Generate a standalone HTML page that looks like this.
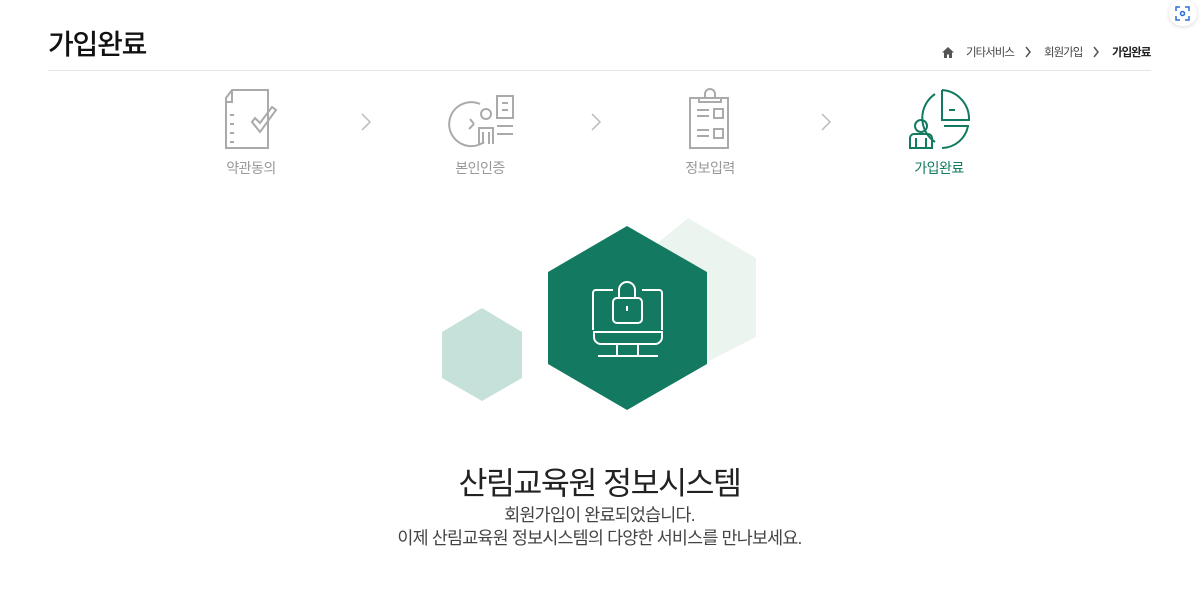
<!DOCTYPE html>
<html><head><meta charset="utf-8"><style>
body{margin:0;width:1199px;height:607px;background:#fff;font-family:"Liberation Sans","Noto Sans CJK KR",sans-serif;position:relative;overflow:hidden}
.a{position:absolute}
h1{position:absolute;left:48px;top:23px;margin:0;font-size:28px;font-weight:500;color:#111;letter-spacing:-1.2px}
.line{position:absolute;left:48px;top:70px;width:1103px;height:1px;background:#e5e5e5}
.bc{position:absolute;top:44px;font-size:11.5px;color:#444;letter-spacing:-1px}
.lbl{position:absolute;top:158px;font-size:14px;color:#999;width:100px;text-align:center;letter-spacing:-0.5px}
.t1{position:absolute;top:458px;left:0;width:1199px;text-align:center;font-size:31.5px;color:#222;letter-spacing:-1.5px}
.t2{position:absolute;top:504px;left:0;width:1199px;text-align:center;font-size:17.4px;color:#444;line-height:23px;letter-spacing:-0.8px}
</style></head><body>
<h1>가입완료</h1>
<div class="line"></div>
<svg class="a" style="left:941px;top:46px" width="14" height="13" viewBox="0 0 14 13"><path d="M7 1L1 6.5h2V12h3V8.5h2V12h3V6.5h2z" fill="#555"/></svg>
<div class="bc" style="left:966px">기타서비스</div>
<svg class="a" style="left:1024px;top:46px" width="8" height="12"><path d="M2 1l4 5-4 5" stroke="#555" stroke-width="1.5" fill="none"/></svg>
<div class="bc" style="left:1044px">회원가입</div>
<svg class="a" style="left:1092px;top:46px" width="8" height="12"><path d="M2 1l4 5-4 5" stroke="#555" stroke-width="1.5" fill="none"/></svg>
<div class="bc" style="left:1112px;font-weight:bold;color:#222">가입완료</div>
<div class="a" style="left:1169px;top:0;width:28px;height:26px;border-radius:13px;background:#fff;box-shadow:0 1px 4px rgba(0,0,0,.15)"></div>
<svg class="a" style="left:1175px;top:6px" width="15" height="15" viewBox="0 0 15 15" fill="none" stroke="#2a6fd6" stroke-width="1.5"><path d="M1 5V1h4M10 1h4v4M14 10v4h-4M5 14H1v-4"/><circle cx="7.5" cy="7.5" r="2"/></svg>

<svg class="a" style="left:200px;top:80px" width="800" height="80" viewBox="0 0 800 80" fill="none" stroke="#aaa" stroke-width="2">
<path d="M32 10h36v58H26V18zM32 10v12h-6"/><path d="M30 35h4M30 44h4M30 53h4M30 62h4" /><path d="M52 42l8 10 16-22-4-3-12 16-5-5z"/>
<path d="M280 24A22 22 0 1 0 284 62"/><path d="M274 44l-4-5M274 44l-5 5"/><circle cx="286" cy="34" r="5"/><path d="M279 64v-16h14v16M283 52v12M289 52v12"/><path d="M297 16h16v22h-16zM302 23h6M302 30h6M297 46h16M297 54h16"/>
<path d="M490 18h38v50h-38zM505 18v-4a5 5 0 0 1 10 0v4M499 18v4h22v-4M497 30h12M497 36h12M497 50h12M497 56h12M514 29h9v9h-9zM514 49h9v9h-9z"/>
<path d="M162 34l8 8-8 8M392 34l8 8-8 8M622 34l8 8-8 8" stroke="#bbb" stroke-width="1.5"/>
<g stroke="#127a60"><path d="M735 62A29 29 0 0 1 735 14M742 10V40h27A29 29 0 0 0 742 10M749 30h6M744 46h24A27 27 0 0 1 742 68"/><circle cx="721" cy="46" r="6"/><path d="M710 68v-10a4 4 0 0 1 4-4h14a4 4 0 0 1 4 4v10zM716 58v10M726 58v10"/></g>
</svg>
<div class="lbl" style="left:201px">약관동의</div>
<div class="lbl" style="left:430px">본인인증</div>
<div class="lbl" style="left:660px">정보입력</div>
<div class="lbl" style="left:889px;color:#127a60">가입완료</div>

<svg class="a" style="left:0;top:0" width="1199" height="607">
<polygon points="688,218 756,258 756,337 707,362 640,330 640,258" fill="#ecf4f0"/>
<polygon points="482,308 522,332 522,378 482,401 442,378 442,332" fill="#c6e1da"/>
<polygon points="627,226 707,272 707,364 627,410 548,364 548,272" fill="#137a61"/>
<g fill="none" stroke="#fff" stroke-width="2">
<path d="M613 290h-17a3 3 0 0 0-3 3v37M642 290h17a3 3 0 0 1 3 3v37"/>
<path d="M594 332h68v5a7 7 0 0 1-7 7h-54a7 7 0 0 1-7-7z"/>
<path d="M617 344v12M638 344v12M598 356h60"/>
<rect x="613" y="298" width="29" height="25" rx="4"/>
<path d="M619 298v-8a8 8 0 0 1 16 0v8M627 306v5"/>
</g></svg>

<div class="t1">산림교육원 정보시스템</div>
<div class="t2">회원가입이 완료되었습니다.<br>이제 산림교육원 정보시스템의 다양한 서비스를 만나보세요.</div>
</body></html>
